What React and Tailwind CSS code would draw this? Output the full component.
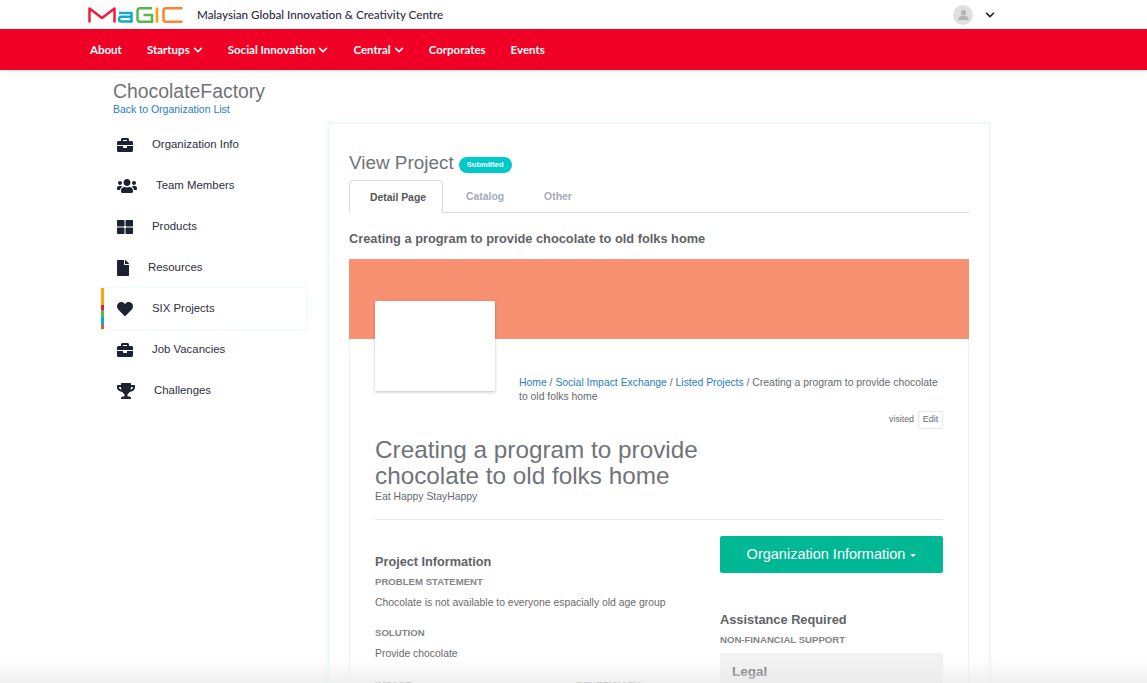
import React from 'react';
import { FaBriefcase, FaUsers, FaThLarge, FaFile, FaHeart, FaTrophy, FaChevronDown } from 'react-icons/fa';

// slot = width from the icon's left edge to where the label starts
const sidebarItems = [
    { label: 'Organization Info', Icon: FaBriefcase, size: 'text-[16px]', slot: 'w-[35px]' },
    { label: 'Team Members', Icon: FaUsers, size: 'text-[20px]', slot: 'w-[39px]' },
    { label: 'Products', Icon: FaThLarge, size: 'text-[16px]', slot: 'w-[35px]' },
    { label: 'Resources', Icon: FaFile, size: 'text-[16px] -ml-[2px]', slot: 'w-[31px]' },
    { label: 'SIX Projects', Icon: FaHeart, size: 'text-[16px]', slot: 'w-[35px]', active: true },
    { label: 'Job Vacancies', Icon: FaBriefcase, size: 'text-[16px]', slot: 'w-[35px]' },
    { label: 'Challenges', Icon: FaTrophy, size: 'text-[18px]', slot: 'w-[37px]' },
];

const navItems = [
    { label: 'About' },
    { label: 'Startups', caret: true },
    { label: 'Social Innovation', caret: true },
    { label: 'Central', caret: true },
    { label: 'Corporates' },
    { label: 'Events' },
];

const MagicLogo = () => (
    <svg width="96" height="18" viewBox="0 0 96 18" fill="none" strokeWidth="2.5">
        <path d="M1.500 16.500V2.500L14 12L26.500 2.500V16.500" stroke="#ee1c3b" strokeLinejoin="round" />
        <path d="M31 7H43.500V15.500H33A2.400 2.400 0 0 1 33 10.800H43" stroke="#12a9c8" />
        <path d="M64 2.200H52A2.500 2.500 0 0 0 49.500 4.700V13.300A2.500 2.500 0 0 0 52 15.800H64V9H55.500" stroke="#55b848" />
        <path d="M69 1.500V16.500" stroke="#f5a11c" strokeWidth="2.800" />
        <path d="M94.500 2.200H78A2.500 2.500 0 0 0 75.500 4.700V13.300A2.500 2.500 0 0 0 78 15.800H94.500" stroke="#f58634" />
    </svg>
);

const TopBar = () => (
    <div className="flex h-[29px] items-center bg-white pl-[88px] pr-[152px]">
        <MagicLogo />
        <span className="ml-[13px] font-['Lato',sans-serif] text-[11.650px] font-medium text-[#2a2e3f]">
            Malaysian Global Innovation &amp; Creativity Centre
        </span>
        <div className="ml-auto flex items-center">
            <div className="flex h-5 w-5 items-center justify-center rounded-full bg-[#dfdfdf]">
                <svg width="14" height="14" viewBox="0 0 14 14" fill="#b5b5b5">
                    <circle cx="7.500" cy="4.600" r="2.600" />
                    <path d="M2 12c.6-3 2.600-4.400 5.500-4.400S12.400 9 12.800 12z" />
                </svg>
            </div>
            <FaChevronDown className="ml-3 text-[10px] text-[#23273a]" />
        </div>
    </div>
);

const NavBar = () => (
    <nav className="flex h-[41px] items-center gap-[25px] bg-[#f00024] pl-[90px] pt-[1px] font-['Lato',sans-serif] text-[11.500px] font-bold text-white shadow-[0_1px_3px_rgba(0,0,0,0.15)]">
        {navItems.map((item) => (
            <span key={item.label} className="flex items-center gap-[3px]">
                {item.label}
                {item.caret && <FaChevronDown className="text-[10px]" />}
            </span>
        ))}
    </nav>
);

const Sidebar = () => (
    <aside className="w-[205px] shrink-0 font-['Liberation_Sans',sans-serif]">
        <div className="pl-3 pt-[10px]">
            <h1 className="text-[19.400px] leading-[23px] text-[#707478]">ChocolateFactory</h1>
            <a className="block text-[10.500px] leading-[12px] text-[#2a7dbf]">Back to Organization List</a>
        </div>
        <ul className="mt-[9px]">
            {sidebarItems.map(({ label, Icon, size, slot, active }) => (
                <li
                    key={label}
                    className={`relative flex h-[41px] items-center pl-4 text-[11.400px] text-[#2b2f3d] ${active ? 'bg-white shadow-[0_0_4px_rgba(170,215,225,0.35)]' : ''}`}
                >
                    {active && (
                        <div className="absolute bottom-0 left-0 top-0 flex w-[3px] flex-col">
                            <div className="h-[17px] bg-[#fba800]" />
                            <div className="h-[5px] bg-[#e9193f]" />
                            <div className="h-[7px] bg-[#55b848]" />
                            <div className="h-2 bg-[#12a9c8]" />
                            <div className="h-1 bg-[#f2560f]" />
                        </div>
                    )}
                    <span className={`flex shrink-0 ${slot}`}>
                        <Icon className={`${size} text-[#1d2233]`} />
                    </span>
                    <span>{label}</span>
                </li>
            ))}
        </ul>
    </aside>
);

const Field = ({ label, children }) => (
    <div>
        <div className="text-[9.600px] font-bold uppercase leading-[12px] text-[#858585]">{label}</div>
        <p className="mt-[8px] text-[10.400px] leading-[14px] text-[#6a6a6a]">{children}</p>
    </div>
);

const ProjectCard = () => (
    <main className="mt-[53px] h-[700px] w-[662px] shrink-0 border border-[#eef5f6] bg-white px-5 font-['Liberation_Sans',sans-serif] shadow-[0_0_4px_rgba(170,215,225,0.3)]">
        <div className="mt-[27px] flex items-center">
            <h2 className="text-[18.900px] leading-[24px] text-[#707478]">View Project</h2>
            <span className="ml-[5px] mt-[3px] flex h-4 w-[53px] items-center justify-center rounded-full bg-[#00c9c9] text-[7.500px] font-bold text-white">
                Submitted
            </span>
        </div>

        <div className="mt-[5px] flex h-[33px] border-b border-[#dcdcdc] text-[10.400px] font-bold">
            <div className="-mb-px flex h-[33px] w-[94px] items-center justify-center rounded-t border border-b-0 border-[#dcdcdc] bg-white pl-1 pt-[2px] text-[#555]">
                Detail Page
            </div>
            <div className="ml-[23px] flex items-center pt-[2px] text-[#a4abc0]">Catalog</div>
            <div className="ml-10 flex items-center pt-[2px] text-[#a4abc0]">Other</div>
        </div>

        <h3 className="mt-[18px] text-[12.800px] font-bold leading-[16px] text-[#5f6368]">
            Creating a program to provide chocolate to old folks home
        </h3>

        <div className="mt-3 h-[80px] bg-[#f89172]" />

        <div className="border-x border-[#f0f0f0] px-[25px]">
            <div className="flex">
                <div className="-mt-[38px] h-[90px] w-[120px] shrink-0 bg-white shadow-[0_1px_3px_rgba(0,0,0,0.25)]" />
                <div className="ml-6 mt-[37px] flex-1">
                    <p className="text-[10.400px] leading-[14px] text-[#666a6e]">
                        <a className="text-[#2a7dbf]">Home</a> / <a className="text-[#2a7dbf]">Social Impact Exchange</a> /{' '}
                        <a className="text-[#2a7dbf]">Listed Projects</a> / Creating a program to provide chocolate to old folks home
                    </p>
                    <div className="mt-[7px] flex items-center justify-end">
                        <span className="text-[8.800px] text-[#666a6e]">visited</span>
                        <span className="ml-1 flex h-[18px] w-[25px] items-center justify-center rounded-[2px] border border-[#e6e6e6] text-[9px] text-[#666a6e]">
                            Edit
                        </span>
                    </div>
                </div>
            </div>

            <h1 className="mt-[8px] w-[360px] text-[24.300px] leading-[26px] text-[#707478]">
                Creating a program to provide chocolate to old folks home
            </h1>
            <p className="mt-[1px] text-[10.400px] leading-[14px] text-[#666a6e]">Eat Happy StayHappy</p>

            <div className="mt-[15px] border-t border-[#e8e8e8]" />

            <div className="mt-4 flex">
                <div className="w-[345px] shrink-0 pt-[18px]">
                    <h4 className="text-[12.700px] font-bold leading-[16px] text-[#5f6368]">Project Information</h4>
                    <div className="mt-[6px] space-y-[17px]">
                        <Field label="Problem Statement">Chocolate is not available to everyone espacially old age group</Field>
                        <Field label="Solution">Provide chocolate</Field>
                    </div>
                    <div className="mt-[18px] flex text-[9.600px] font-bold uppercase leading-[12px] text-[#858585]">
                        <span className="w-[201px]">Impact</span>
                        <span>Beneficiary</span>
                    </div>
                </div>
                <div className="w-[223px]">
                    <button className="flex h-[37px] w-full items-center justify-center rounded-[2px] bg-[#00b894] text-[14.500px] text-white">
                        Organization Information
                        <span className="ml-[5px] mt-[1px] h-0 w-0 border-x-[3.500px] border-t-[3.500px] border-x-transparent border-t-white" />
                    </button>
                    <h4 className="mt-[39px] text-[12.800px] font-bold leading-[16px] text-[#5f6368]">Assistance Required</h4>
                    <div className="mt-[6px] text-[9.600px] font-bold uppercase leading-[12px] text-[#858585]">Non-Financial Support</div>
                    <div className="mt-[7px] h-[60px] bg-[#f2f2f2] px-[12px] pt-[11px] text-[13.500px] font-bold leading-[16px] text-[#5f6368]">Legal</div>
                </div>
            </div>
        </div>
    </main>
);

const App = () => (
    <div className="relative h-[683px] w-full overflow-hidden bg-white">
        <TopBar />
        <NavBar />
        <div className="flex pl-[101px]">
            <Sidebar />
            <div className="w-[22px] shrink-0" />
            <ProjectCard />
        </div>
        {/* soft fade along the bottom edge of the window */}
        <div className="pointer-events-none absolute inset-x-0 bottom-0 h-[24px] bg-gradient-to-b from-transparent to-[#e9e9e9]/70" />
    </div>
);

export default App;
